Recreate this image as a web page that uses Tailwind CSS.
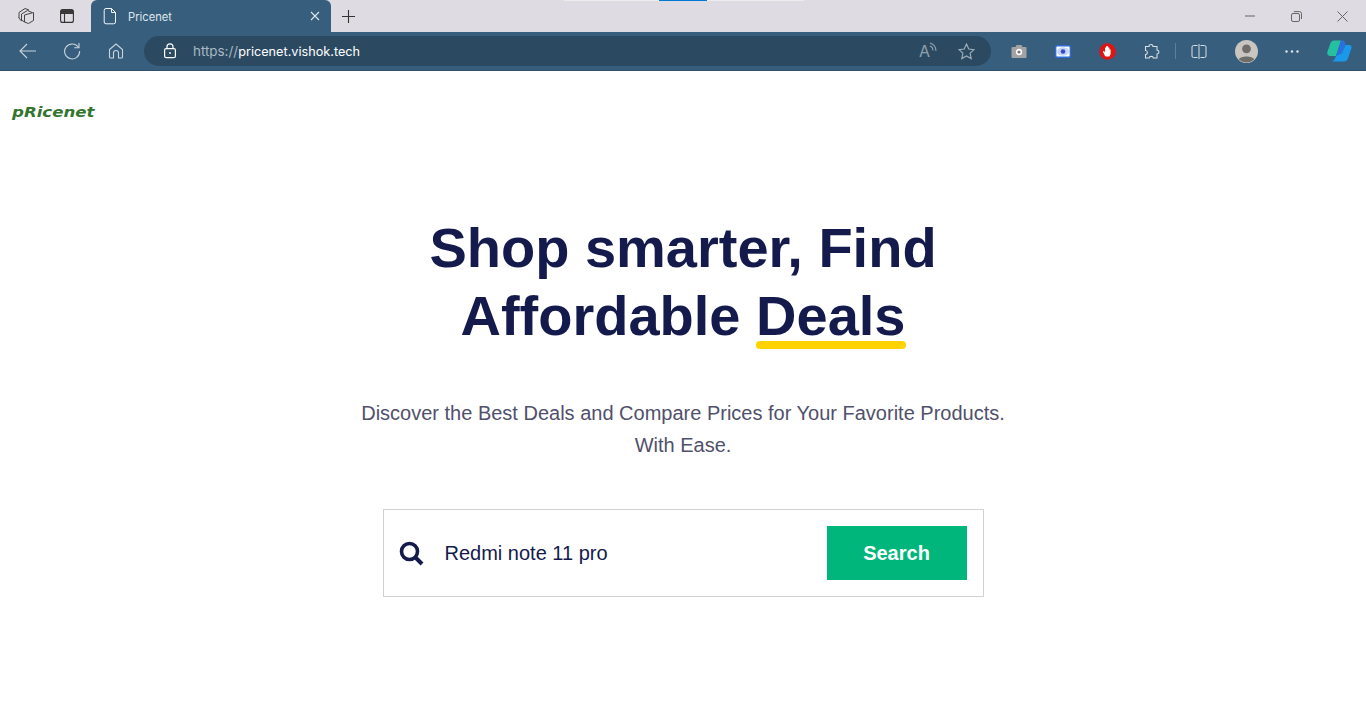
<!DOCTYPE html>
<html>
<head>
<meta charset="utf-8">
<title>Pricenet</title>
<script src="https://cdn.jsdelivr.net/npm/@tailwindcss/browser@4"></script>
</head>
<body class="h-[728px] w-[1366px] overflow-hidden bg-white font-['Liberation_Sans',sans-serif]">
<header class="flex h-[71px] flex-col">
  <div class="relative flex h-[32px] items-center bg-[#dedce2]">
    <div class="absolute left-[564px] top-0 h-px w-[240px] bg-[#ececec]"></div>
    <div class="absolute left-[659px] top-0 h-px w-[48px] bg-[#0078d4]"></div>
    <div class="flex w-[91px] items-center pl-[17px]">
      <svg class="h-[18px] w-[18px]" viewBox="0 0 18 18" fill="none" stroke="#444" stroke-width="1"><path d="M2 11V5.5L8 1.5L12 3"/><path d="M4.5 14V7L10.5 3.5L15 5.5"/><path d="M7.5 8L16.5 5.5V13.5L11.5 16.5L7.5 15Z"/><path d="M1.5 10.5L4.5 14M4.5 13L7.5 15"/></svg>
      <svg class="ml-[25px] h-[14px] w-[14px]" viewBox="0 0 14 14" fill="none" stroke="#333" stroke-width="1.1"><rect x=".6" y=".6" width="12.8" height="12.8" rx="2"/><path d="M1 4.4H13M4.5 4.4V13.4"/><path d="M1 2.5H13" stroke-width="2.8"/></svg>
    </div>
    <div class="flex h-[32px] w-[240px] items-center rounded-t-[6px] bg-[#375e7d] pl-[12px] pr-[11px] text-white">
      <svg class="h-[18px] w-[14px]" viewBox="0 0 14 18" fill="none" stroke="#f2f5f8" stroke-width="1"><path d="M3 1.5H8.5L12.5 5.5V15A1.8 1.8 0 0 1 10.7 16.8H3A1.8 1.8 0 0 1 1.2 15V3.3A1.8 1.8 0 0 1 3 1.5Z"/><path d="M8.5 1.5V5.5H12.5"/></svg>
      <span class="ml-[11px] flex-1 pt-[2px] text-[11.2px] text-[#dfe6ec] font-['Inter',sans-serif]">Pricenet</span>
      <svg class="h-[10px] w-[10px]" viewBox="0 0 10 10" stroke="#dfe6ec" stroke-width="1.1"><path d="M1 1L9 9M9 1L1 9"/></svg>
    </div>
    <svg class="ml-[10px] h-[15px] w-[15px]" viewBox="0 0 15 15" stroke="#333" stroke-width="1.1"><path d="M7.5 1V14M1 7.5H14"/></svg>
    <div class="ml-auto flex items-center">
      <svg class="h-[10px] w-[10px]" viewBox="0 0 10 10" stroke="#666" stroke-width="1"><path d="M0 5H10"/></svg>
      <svg class="ml-[36px] h-[11px] w-[11px]" viewBox="0 0 11 11" fill="none" stroke="#666" stroke-width="1"><rect x="0.5" y="2.5" width="8" height="8" rx="1.5"/><path d="M2.8 0.6H8.5A2 2 0 0 1 10.5 2.6V8"/></svg>
      <svg class="ml-[35px] mr-[18px] h-[11px] w-[11px]" viewBox="0 0 11 11" stroke="#666" stroke-width="1"><path d="M0.5 0.5L10.5 10.5M10.5 0.5L0.5 10.5"/></svg>
    </div>
  </div>
  <div class="flex h-[39px] items-center border-b border-[#2f5068] bg-[#375e7d]">
    <div class="flex w-[144px] items-center pl-[19px]">
      <svg class="h-[16px] w-[18px]" viewBox="0 0 18 16" fill="none" stroke="#c9d4dd" stroke-width="1.1"><path d="M8 1L1 8L8 15M1 8H17"/></svg>
      <svg class="ml-[26px] h-[18px] w-[18px]" viewBox="0 0 18 18" fill="none" stroke="#c9d4dd" stroke-width="1.1"><path d="M15.5 5.5A7.5 7.5 0 1 0 16.6 9"/><path d="M16 1V5.8H11.2"/></svg>
      <svg class="ml-[27px] h-[16px] w-[16px]" viewBox="0 0 16 16" fill="none" stroke="#c9d4dd" stroke-width="1.1"><path d="M1.5 6.5L8 1L14.5 6.5V14A1 1 0 0 1 13.5 15H10.5V10A2.5 2.5 0 0 0 5.5 10V15H2.5A1 1 0 0 1 1.5 14Z"/></svg>
    </div>
    <div class="flex h-[30px] w-[847px] items-center rounded-full bg-[#2b4a62] pl-[19px] pr-[16px]">
      <svg class="h-[16px] w-[14px]" viewBox="0 0 14 16" fill="none" stroke="#fff" stroke-width="1.2"><rect x="1.6" y="5.6" width="10.8" height="9" rx="1.6"/><path d="M4 5.5V3.8A3 3 0 0 1 10 3.8V5.5"/><circle cx="7" cy="10" r="0.9" fill="#fff" stroke="none"/></svg>
      <span class="ml-[16px] flex-1 pt-[1px] text-[12.7px] text-white font-['Inter',sans-serif]"><span class="text-[13.4px] text-[#a9b8c4]">https://</span>pricenet.vishok.tech</span>
      <span class="relative mr-[1px] flex h-[18px] w-[18px] items-center text-[16px] text-[#8fa0ae] font-['Inter',sans-serif]">A<svg class="absolute left-[10px] top-0 h-[11px] w-[8px]" viewBox="0 0 8 11" fill="none" stroke="#8fa0ae" stroke-width="1.1"><path d="M1 1Q7 3 7 9M1 4Q4 5 4 8.5"/></svg></span>
      <svg class="ml-[20px] h-[17px] w-[17px]" viewBox="0 0 17 17" fill="none" stroke="#9fafbc" stroke-width="1.1"><path d="M8.5 1L10.8 6L16 6.6L12.1 10.2L13.2 15.6L8.5 12.9L3.8 15.6L4.9 10.2L1 6.6L6.2 6Z"/></svg>
    </div>
    <div class="flex flex-1 items-center pl-[20px]">
      <svg class="h-[16px] w-[16px]" viewBox="0 0 16 16"><path d="M1.5 4H4.5L5.5 2H10.5L11.5 4H14.5A1 1 0 0 1 15.5 5V14A1 1 0 0 1 14.5 15H1.5A1 1 0 0 1 .5 14V5A1 1 0 0 1 1.5 4Z" fill="#a3a3a3"/><circle cx="8" cy="9" r="3.2" fill="#fff"/><circle cx="8" cy="9" r="1.6" fill="#777"/></svg>
      <svg class="ml-[28px] h-[13px] w-[16px]" viewBox="0 0 16 13"><rect x=".7" y=".7" width="14.6" height="11.6" rx="1.5" fill="#fff" stroke="#2d6cdf" stroke-width="1.4"/><ellipse cx="8" cy="6.5" rx="6" ry="4.3" fill="#c3d6f8"/><circle cx="8" cy="6.5" r="2.3" fill="#3b47c9"/></svg>
      <svg class="ml-[28px] h-[17px] w-[17px]" viewBox="0 0 17 17"><circle cx="8.5" cy="8.5" r="8.3" fill="#e01414"/><path d="M6 13L3.8 8.6L4.8 8L6 9.2V4.8L7 4.6V3.6L8 3L9.2 3.6V4.6L10.4 4.8V6.5L11.6 6.6V11L10.4 13.5H7Z" fill="#fff"/></svg>
      <svg class="ml-[27px] h-[17px] w-[17px]" viewBox="0 0 17 17" fill="none" stroke="#d9e1e7" stroke-width="1.05"><path d="M6 3.5C6 .8 10 .8 10 3.5H14V7.2C16.6 7.2 16.6 11 14 11V15H10.3C10.3 12.8 6.2 12.8 6.2 15H2.5V11.5C5 11.5 5 7.5 2.5 7.5V3.5Z"/></svg>
      <div class="ml-[15px] h-[16px] w-px bg-[#5d7f99]"></div>
      <svg class="ml-[15px] h-[15px] w-[16px]" viewBox="0 0 16 15" fill="none" stroke="#d9e1e7" stroke-width="1"><path d="M6.5 1.5H2.5A1.5 1.5 0 0 0 1 3V12A1.5 1.5 0 0 0 2.5 13.5H6.5M9.5 1.5H13.5A1.5 1.5 0 0 1 15 3V12A1.5 1.5 0 0 1 13.5 13.5H9.5M8 0V15"/></svg>
      <svg class="ml-[28px] h-[23px] w-[23px]" viewBox="0 0 23 23"><circle cx="11.5" cy="11.5" r="11.5" fill="#c9c6c2"/><circle cx="11.5" cy="8.8" r="4.4" fill="#6f6d6a"/><path d="M3.8 19.5C5 15.5 18 15.5 19.2 19.5A11.5 11.5 0 0 1 3.8 19.5Z" fill="#6f6d6a"/></svg>
      <svg class="ml-[27px] h-[3px] w-[14px]" viewBox="0 0 14 3" fill="#dfe6ec"><circle cx="1.5" cy="1.5" r="1.2"/><circle cx="7" cy="1.5" r="1.2"/><circle cx="12.5" cy="1.5" r="1.2"/></svg>
      <svg class="ml-[28px] h-[24px] w-[25px]" viewBox="0 0 25 24"><path d="M7 1.5H14L9 17H3.5C1 17-.3 15 .5 12.5L3.5 4C4.2 2.5 5.5 1.5 7 1.5Z" fill="#25c0a0"/><path d="M14 1.5H16C17.5 1.5 18 3 18.5 5L16 13L9 17Z" fill="#2a6fe0"/><path d="M18.5 6H22.5C24 6 25 7.5 24.5 9L21 19.5C20.5 21 19 22.5 17 22.5H5C7 21.5 8.5 19 9 17L15 14Z" fill="#1a98ea"/></svg>
    </div>
  </div>
</header>
<div class="h-[80px] pl-[12px] pt-[29px]">
  <span class="inline-block origin-left scale-x-[1.23] text-[13.5px] leading-[22px] font-bold italic text-[#33752f] font-['DejaVu_Sans',sans-serif]">pRicenet</span>
</div>
<main class="flex flex-col items-center">
  <h1 class="mt-[63px] w-[600px] text-center text-[56px] leading-[68px] font-bold text-[#141a4b]">Shop smarter, Find Affordable <span class="relative inline-block">Deals<span class="absolute bottom-[1px] left-0 right-0 h-[8px] rounded-full bg-[#ffd300]"></span></span></h1>
  <p class="mt-[47px] w-[660px] text-center text-[20px] leading-[32px] text-[#50506b]">Discover the Best Deals and Compare Prices for Your Favorite Products. With Ease.</p>
  <div class="mt-[48px] flex h-[88px] w-[601px] items-center border border-[#d2d2d2] bg-white pl-[15px] pr-[16px]">
    <svg class="h-[25px] w-[25px]" viewBox="0 0 25 25" fill="none" stroke="#141a4b"><circle cx="10.5" cy="10.5" r="8" stroke-width="3.6"/><path d="M16.5 16.5L23 23" stroke-width="4"/></svg>
    <span class="ml-[21px] flex-1 text-[20px] text-[#141a4b]">Redmi note 11 pro</span>
    <button class="h-[54px] w-[140px] bg-[#00b67a] text-[20px] font-bold text-white">Search</button>
  </div>
</main>
</body>
</html>
